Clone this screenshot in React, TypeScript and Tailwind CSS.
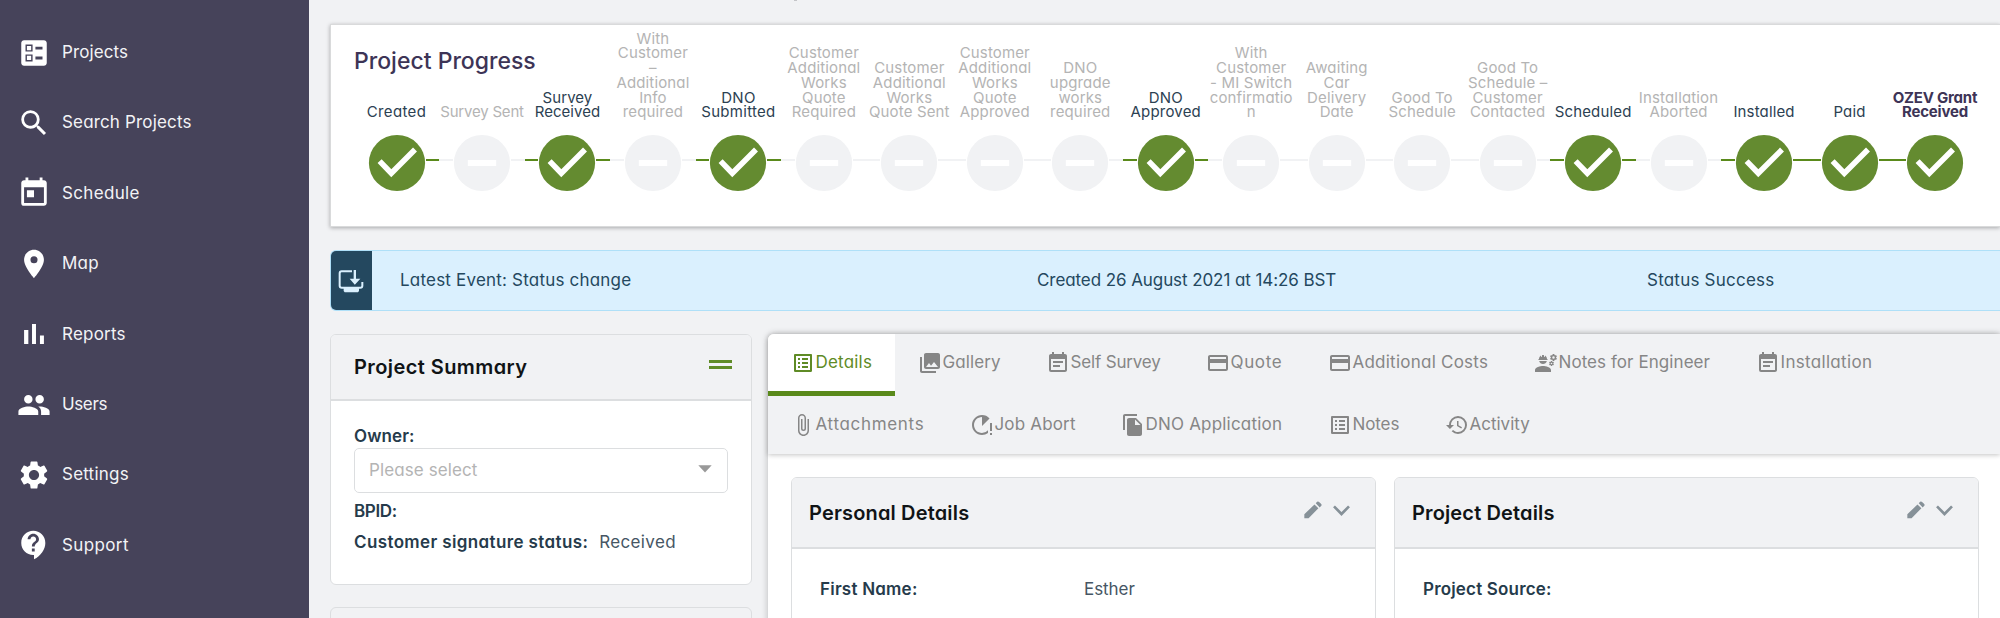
import type { ReactNode } from 'react';
import type { IconType } from 'react-icons';
import {
  MdAttachFile,
  MdBallot,
  MdContactSupport,
  MdCreditCard,
  MdEngineering,
  MdEventNote,
  MdFileCopy,
  MdHistory,
  MdLocationOn,
  MdOutlineListAlt,
  MdPeople,
  MdPhotoLibrary,
  MdRunningWithErrors,
  MdSearch,
  MdSettings,
  MdToday,
} from 'react-icons/md';

function BarsIcon({ className }: { className?: string }) {
  return (
    <svg viewBox="0 0 24 24" fill="currentColor" className={className}>
      <path d="M5 9.2h3V19H5zM10.6 5h2.8v14h-2.8zM16.2 13H19v6h-2.8z" />
    </svg>
  );
}

type NavItem = { label: string; icon: IconType | typeof BarsIcon; tracking: string };

const navItems: NavItem[] = [
  { label: 'Projects', icon: MdBallot, tracking: 'tracking-[0.1px]' },
  { label: 'Search Projects', icon: MdSearch, tracking: 'tracking-[0.16px]' },
  { label: 'Schedule', icon: MdToday, tracking: 'tracking-[0.34px]' },
  { label: 'Map', icon: MdLocationOn, tracking: 'tracking-[0.25px]' },
  { label: 'Reports', icon: BarsIcon, tracking: 'tracking-[0.22px]' },
  { label: 'Users', icon: MdPeople, tracking: 'tracking-[-0.38px]' },
  { label: 'Settings', icon: MdSettings, tracking: 'tracking-[0.22px]' },
  { label: 'Support', icon: MdContactSupport, tracking: 'tracking-[0.38px]' },
];

function Sidebar() {
  return (
    <nav className="flex w-[309px] shrink-0 flex-col bg-[#46435a] pt-[17.500px]">
      {navItems.map(({ label, icon: Icon, tracking }) => (
        <a key={label} className="flex h-[70.4px] shrink-0 items-center pl-[17px] text-[#f3f3f6]">
          <Icon className="size-[34px] text-white" />
          <span className={`ml-[11px] text-[17px] ${tracking}`}>{label}</span>
        </a>
      ))}
    </nav>
  );
}

type Step = { lines: string[]; done?: boolean; current?: boolean; tracking?: string };

const steps: Step[] = [
  { lines: ['Created'], done: true, tracking: 'tracking-[0.35px]' },
  { lines: ['Survey Sent'], tracking: 'tracking-[-0.2px]' },
  { lines: ['Survey', 'Received'], done: true, tracking: 'tracking-[0.05px]' },
  { lines: ['With', 'Customer', '–', 'Additional', 'Info', 'required'] },
  { lines: ['DNO', 'Submitted'], done: true, tracking: 'tracking-[0.3px]' },
  { lines: ['Customer', 'Additional', 'Works', 'Quote', 'Required'] },
  { lines: ['Customer', 'Additional', 'Works', 'Quote Sent'] },
  { lines: ['Customer', 'Additional', 'Works', 'Quote', 'Approved'] },
  { lines: ['DNO', 'upgrade', 'works', 'required'] },
  { lines: ['DNO', 'Approved'], done: true, tracking: 'tracking-[0.2px]' },
  { lines: ['With', 'Customer', '- MI Switch', 'confirmatio', 'n'] },
  { lines: ['Awaiting', 'Car', 'Delivery', 'Date'] },
  { lines: ['Good To', 'Schedule'] },
  { lines: ['Good To', 'Schedule –', 'Customer', 'Contacted'] },
  { lines: ['Scheduled'], done: true },
  { lines: ['Installation', 'Aborted'] },
  { lines: ['Installed'], done: true, tracking: 'tracking-[0.15px]' },
  { lines: ['Paid'], done: true },
  { lines: ['OZEV Grant', 'Received'], done: true, current: true, tracking: 'tracking-[-0.2px]' },
];

function StepMark({ done }: { done?: boolean }) {
  return (
    <svg viewBox="-29 -29 58 58" className="size-[58px] shrink-0">
      <circle r="28.1" className={done ? 'fill-[#648b30]' : 'fill-[#f1f2f4]'} />
      {done ? (
        <path d="M-17.4-1.9-5.7 10.3 18-13.4" fill="none" stroke="#fff" strokeWidth="5.6" />
      ) : (
        <path d="M-14.2 0h28.4" stroke="#fff" strokeWidth="6" />
      )}
    </svg>
  );
}

function StepLine({ done, hidden }: { done?: boolean; hidden: boolean }) {
  const color = hidden ? 'bg-transparent' : done ? 'bg-[#5a8a1b]' : 'bg-[#f1f2f4]';
  return <span className={`mb-[6px] h-[2.5px] flex-1 ${color}`} />;
}

function ProgressCard() {
  return (
    <section className="mt-[23px] ml-[21px] flex h-[203px] shrink-0 flex-col border border-r-0 border-[#d9dadb] bg-white shadow-[0_1px_4px_rgba(0,0,0,0.3)]">
      <h2 className="mt-[22px] ml-[23px] h-7 shrink-0 text-[23px] leading-7 font-medium text-[#3d3456]">
        Project Progress
      </h2>
      <ol className="-mt-[50px] ml-[22.8px] flex w-[1624px] shrink-0">
        {steps.map((step, i) => (
          <li key={i} className="flex w-[85.47px] shrink-0 flex-col">
            <div className="flex h-[95px] flex-col justify-end">
              <p
                className={`text-center text-[15px] leading-[14.7px] whitespace-pre ${
                  step.tracking ?? 'tracking-[0.15px]'
                } ${step.current ? 'font-bold text-[#3d3456]' : step.done ? 'text-[#2c4152]' : 'text-[#b4b4b4]'}`}
              >
                {step.lines.join('\n')}
              </p>
            </div>
            <div className="mt-[14px] flex items-center">
              <StepLine done={step.done} hidden={i === 0} />
              <StepMark done={step.done} />
              <StepLine done={step.done} hidden={i === steps.length - 1} />
            </div>
          </li>
        ))}
      </ol>
    </section>
  );
}

function EventBar() {
  return (
    <section className="mt-[23px] ml-[21px] flex h-[61px] shrink-0 items-center overflow-hidden rounded-l-md border border-r-0 border-[#afe0f8] bg-[#daf0fe] text-[17px] text-[#24485f]">
      <div className="flex h-full w-[41px] items-center bg-[#24485f] pl-[7px]">
        <svg viewBox="40 84 78 72" className="h-6 w-[26px]" fill="none">
          <path
            d="M82 91H51q-6 0-6 6v37q0 6 6 6h56q6 0 6-6v-11"
            stroke="#daf0fe"
            strokeWidth="6"
          />
          <path d="M57 140h46v10l-3 4H60l-3-4zM87 87h7v26h13l-16.5 18L75 113h12z" fill="#daf0fe" />
        </svg>
      </div>
      <span className="ml-[28px] w-[637px] tracking-[0.2px]">Latest Event: Status change</span>
      <span className="w-[610px] tracking-[-0.08px]">Created 26 August 2021 at 14:26 BST</span>
      <span className="tracking-[0.22px]">Status Success</span>
    </section>
  );
}

function SummaryCard() {
  return (
    <section className="h-[251px] w-[422px] shrink-0 overflow-hidden rounded-md border border-[#dcdee0] bg-white text-[17px] text-[#263b4b]">
      <header className="flex h-[66px] items-center justify-between border-b-2 border-[#dcdee0] bg-[#f1f2f4] pr-[19px] pl-[23px]">
        <h3 className="text-[20px] font-semibold tracking-[0.42px] text-[#101416]">
          Project Summary
        </h3>
        <span className="mb-[6px] flex w-[23px] flex-col gap-[3px]">
          <i className="h-[3px] bg-[#5f8b26]" />
          <i className="h-[3px] bg-[#5f8b26]" />
        </span>
      </header>
      <div className="px-[23px] pt-[24px]">
        <div className="h-[23px] leading-[22px] font-semibold tracking-[0.1px]">Owner:</div>
        <div className="flex h-[45px] w-[374px] items-center justify-between rounded-[5px] border border-[#dcdee0] pr-[15px] pl-[14px] text-[#b4b4b4]">
          <span className="tracking-[0.1px]">Please select</span>
          <svg viewBox="0 0 14 8" className="mb-[3px] h-[8px] w-[14px]">
            <path d="M.3.3h13.4L7 7.5z" fill="#999" />
          </svg>
        </div>
        <div className="mt-[3px] h-[31px] leading-[31px] font-semibold tracking-[-0.35px]">BPID:</div>
        <div className="h-[31px] leading-[30px]">
          <b className="font-semibold tracking-[0.38px]">Customer signature status:</b>
          <span className="ml-[11px] tracking-[0.35px] text-[#465664]">Received</span>
        </div>
      </div>
    </section>
  );
}

type Tab = { label: string; icon: IconType; width: string; tracking: string; active?: boolean };

const tabRows: Tab[][] = [
  [
    { label: 'Details', icon: MdOutlineListAlt, width: 'w-[127px]', tracking: 'tracking-[0.2px]', active: true },
    { label: 'Gallery', icon: MdPhotoLibrary, width: 'w-[128px]', tracking: 'tracking-[0.1px]' },
    { label: 'Self Survey', icon: MdEventNote, width: 'w-[160px]', tracking: 'tracking-[-0.17px]' },
    { label: 'Quote', icon: MdCreditCard, width: 'w-[122px]', tracking: 'tracking-[0.65px]' },
    { label: 'Additional Costs', icon: MdCreditCard, width: 'w-[206px]', tracking: 'tracking-[0.24px]' },
    { label: 'Notes for Engineer', icon: MdEngineering, width: 'w-[222px]', tracking: 'tracking-[0.07px]' },
    { label: 'Installation', icon: MdEventNote, width: 'w-[162px]', tracking: 'tracking-[0.32px]' },
  ],
  [
    { label: 'Attachments', icon: MdAttachFile, width: 'w-[179px]', tracking: 'tracking-[0.68px]' },
    { label: 'Job Abort', icon: MdRunningWithErrors, width: 'w-[151px]', tracking: 'tracking-[0.17px]' },
    { label: 'DNO Application', icon: MdFileCopy, width: 'w-[207px]', tracking: 'tracking-[0.2px]' },
    { label: 'Notes', icon: MdOutlineListAlt, width: 'w-[117px]', tracking: 'tracking-[-0.1px]' },
    { label: 'Activity', icon: MdHistory, width: 'w-[130px]', tracking: 'tracking-[0px]' },
  ],
];

function TabBar() {
  return (
    <div className="flex h-[120px] shrink-0 flex-col rounded-tl-md bg-[#f1f2f4] shadow-[0_1px_5px_rgba(0,0,0,0.24)]">
      {tabRows.map((row, i) => (
        <div key={i} className="flex h-[62px] shrink-0">
          {row.map(({ label, icon: Icon, width, tracking, active }) => (
            <div
              key={label}
              className={`flex shrink-0 items-center border-b-[5px] pl-[22.5px] text-[17px] ${width} ${tracking} ${
                active
                  ? 'rounded-tl-md border-[#5a8a1b] bg-white text-[#5f8b26]'
                  : 'border-transparent text-[#868686]'
              }`}
            >
              <Icon className="size-6 shrink-0" />
              <span className="ml-[1px] whitespace-nowrap">{label}</span>
            </div>
          ))}
        </div>
      ))}
    </div>
  );
}

function DetailCard({ title, tracking, children }: { title: string; tracking: string; children: ReactNode }) {
  return (
    <section className="h-[200px] w-[585px] shrink-0 overflow-hidden rounded-t-md border border-[#dcdee0] bg-white">
      <header className="flex h-[71px] items-center border-b-2 border-[#dcdee0] bg-[#f1f2f4] pr-[25px] pl-[17px]">
        <h3 className={`flex-1 text-[20px] font-semibold text-[#101416] ${tracking}`}>{title}</h3>
        <svg viewBox="43 86 55 54" className="mb-[6px] h-[18px] w-[18px]" fill="#869198">
          <path d="M44 138v-12l31-30 12 12-30 30zM79 92l4-4q3-3 7 1l5 5q4 4 0 7l-4 4z" />
        </svg>
        <svg viewBox="130 99 51 33" className="mb-[4px] ml-[11px] h-[11px] w-[17px]" fill="none">
          <path d="M133 103 155.5 126 178 103" stroke="#869198" strokeWidth="8" />
        </svg>
      </header>
      <div className="flex h-[81px] items-center pl-[28px] text-[17px] text-[#263b4b]">{children}</div>
    </section>
  );
}

function DetailsPanel() {
  return (
    <section className="flex h-[320px] w-[1232px] shrink-0 flex-col rounded-tl-md bg-white shadow-[0_0_7px_rgba(0,0,0,0.24)]">
      <TabBar />
      <div className="flex gap-[18px] pt-[23px] pl-[23px]">
        <DetailCard title="Personal Details" tracking="tracking-[0.16px]">
          <b className="w-[264px] font-semibold tracking-[0.22px]">First Name:</b>
          <span className="tracking-[-0.05px] text-[#465664]">Esther</span>
        </DetailCard>
        <DetailCard title="Project Details" tracking="tracking-[0.14px]">
          <b className="font-semibold tracking-[0.18px]">Project Source:</b>
        </DetailCard>
      </div>
    </section>
  );
}

export default function App() {
  return (
    <div className="flex h-[618px] w-[2000px] overflow-hidden bg-[#f1f2f4] font-['Inter',sans-serif] [font-feature-settings:'cv11']">
      <Sidebar />
      <main className="flex min-w-0 flex-1 flex-col overflow-hidden">
        <div className="ml-[485px] h-px w-[3px] shrink-0 bg-[#c4c5c8]" />
        <ProgressCard />
        <EventBar />
        <div className="mt-[23px] ml-[21px] flex shrink-0 gap-[16px]">
          <div className="flex flex-col gap-[22px]">
            <SummaryCard />
            <section className="h-[60px] w-[422px] shrink-0 rounded-md border border-[#dcdee0]" />
          </div>
          <DetailsPanel />
        </div>
      </main>
    </div>
  );
}
